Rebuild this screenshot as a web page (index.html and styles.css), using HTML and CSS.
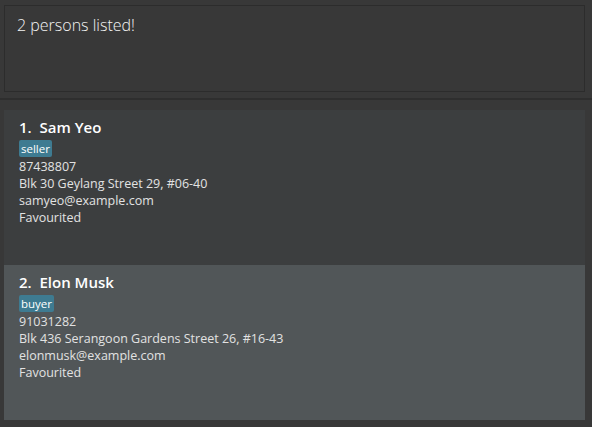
FILE: index.html
```html
<!DOCTYPE html>
<html>
<head>
<meta charset="utf-8">
<link rel="stylesheet" href="styles.css">
</head>
<body>
<div class="result-pane">
  <div class="result-box">2 persons listed!</div>
</div>
<div class="separator"></div>
<div class="list-pane">
  <div class="card card-even">
    <div class="name">1.&nbsp;&nbsp;Sam Yeo</div>
    <div class="tags"><span class="tag">seller</span></div>
    <div class="line">87438807</div>
    <div class="line">Blk 30 Geylang Street 29, #06-40</div>
    <div class="line">samyeo@example.com</div>
    <div class="line">Favourited</div>
  </div>
  <div class="card card-odd">
    <div class="name">2.&nbsp;&nbsp;Elon Musk</div>
    <div class="tags"><span class="tag">buyer</span></div>
    <div class="line">91031282</div>
    <div class="line">Blk 436 Serangoon Gardens Street 26, #16-43</div>
    <div class="line">elonmusk@example.com</div>
    <div class="line">Favourited</div>
  </div>
</div>
</body>
</html>
```
FILE: styles.css
```css
html, body {
  margin: 0;
  padding: 0;
  height: 100%;
  background: #383838;
  font-family: "Open Sans", "Noto Sans", sans-serif;
  overflow: hidden;
}
.result-pane {
  padding: 5px 7px 6px 4px;
}
.result-box {
  border: 1px solid #2c2c2c;
  background: #383838;
  color: #f4f4f4;
  font-size: 16px;
  font-weight: 300;
  line-height: 22px;
  padding: 8px 12px 0;
  box-sizing: border-box;
  height: 87px;
}
.separator {
  height: 2px;
  background: #2e2e2e;
}
.list-pane {
  padding: 10px 7px 0 4px;
  display: flex;
  flex-direction: column;
}
.card {
  height: 155px;
  box-sizing: border-box;
  padding: 7px 15px 0;
  display: flex;
  flex-direction: column;
  align-items: flex-start;
}
.card-even { background: #3c3e3f; }
.card-odd { background: #515658; }
.name {
  color: #ffffff;
  font-size: 15px;
  font-weight: 600;
  line-height: 20px;
}
.tags {
  margin-top: 3px;
  margin-bottom: 1px;
  display: flex;
}
.tag {
  background: #3e7b91;
  color: #ffffff;
  font-size: 11.5px;
  line-height: 17px;
  height: 17px;
  padding: 0 2px;
  border-radius: 2px;
}
.line {
  color: #e2e2e2;
  font-size: 12.5px;
  line-height: 17px;
}
```
